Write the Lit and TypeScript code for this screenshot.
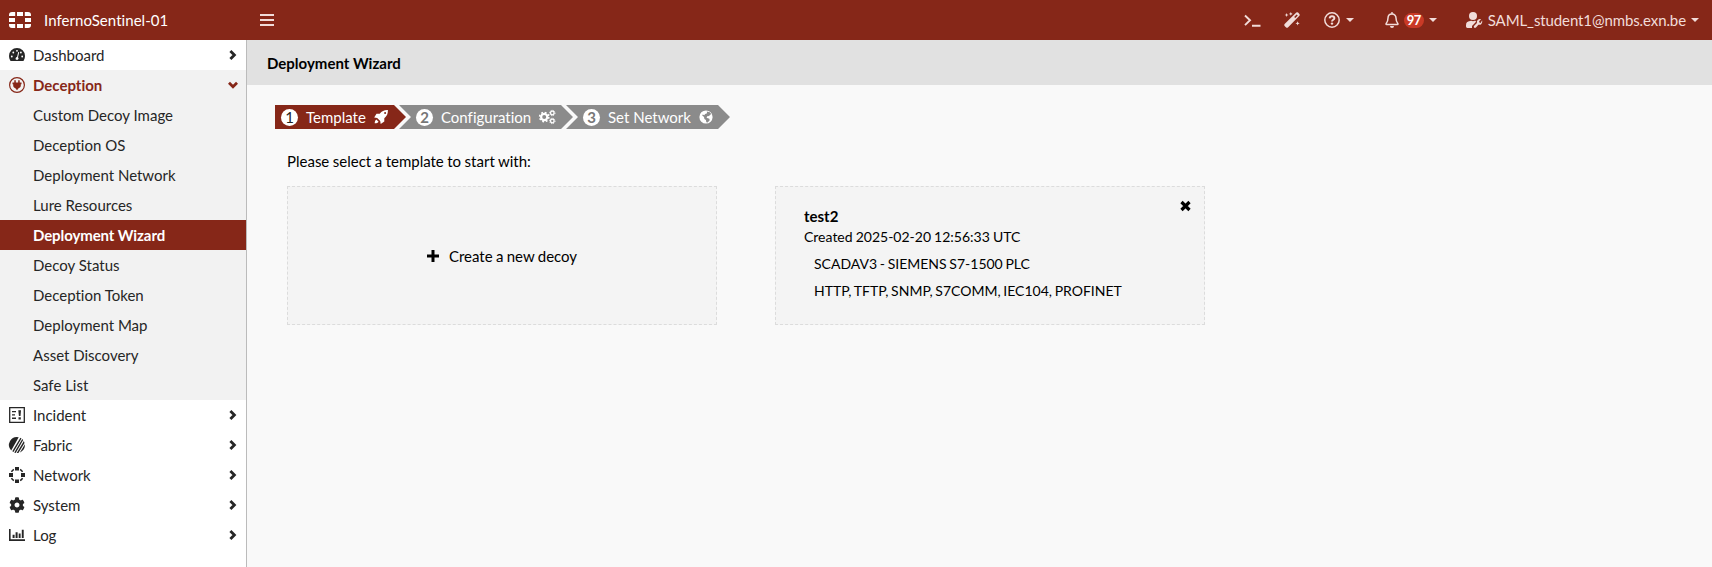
import { LitElement, html, svg, css } from "lit";
import { customElement, property, state } from "lit/decorators.js";

const COG =
  "M487.4 315.7l-42.6-24.6c4.3-23.2 4.3-47 0-70.2l42.6-24.6c4.9-2.8 7.1-8.6 5.5-14-11.1-35.6-30-67.8-54.7-94.6-3.8-4.1-10-5.1-14.8-2.3L380.8 110c-17.9-15.4-38.5-27.3-60.8-35.1V25.8c0-5.6-3.9-10.5-9.4-11.7-36.7-8.2-74.3-7.8-109.2 0-5.5 1.2-9.4 6.1-9.4 11.7V75c-22.2 7.9-42.8 19.8-60.8 35.1L88.7 85.5c-4.9-2.8-11-1.9-14.8 2.3-24.7 26.7-43.6 58.9-54.7 94.6-1.7 5.4.6 11.2 5.5 14L67.3 221c-4.3 23.2-4.3 47 0 70.2l-42.6 24.6c-4.9 2.8-7.1 8.6-5.5 14 11.1 35.6 30 67.8 54.7 94.6 3.8 4.1 10 5.1 14.8 2.3l42.6-24.6c17.9 15.4 38.5 27.3 60.8 35.1v49.2c0 5.6 3.9 10.5 9.4 11.7 36.7 8.2 74.3 7.8 109.2 0 5.5-1.2 9.4-6.1 9.4-11.7v-49.2c22.2-7.9 42.8-19.8 60.8-35.1l42.6 24.6c4.9 2.8 11 1.9 14.8-2.3 24.7-26.7 43.6-58.9 54.7-94.6 1.5-5.5-.7-11.3-5.6-14.1zM256 336c-44.1 0-80-35.9-80-80s35.9-80 80-80 80 35.9 80 80-35.9 80-80 80z";

// Every glyph is drawn in pixels of its own box: [width, height, shapes].
const ICONS: Record<string, [number, number, unknown]> = {
  logo: [22, 16, svg`<path fill="currentColor" d="M8 0h6v4H8zM8 12h6v4H8zM0 6h6v4H0zM16 6h6v4h-6zM3 0h3.200v4H0V3a3 3 0 0 1 3-3zM15.800 0H19a3 3 0 0 1 3 3v1h-6.200zM0 12h6.200v4H3a3 3 0 0 1-3-3zM15.800 12H22v1a3 3 0 0 1-3 3h-3.200z"/>`],
  menu: [14, 14, svg`<path fill="currentColor" d="M0 1h14v2H0zM0 6h14v2H0zM0 11h14v2H0z"/>`],
  dashboard: [16, 16, svg`<path fill="currentColor" d="M8 1A8 8 0 0 0 0 9c0 1.500.4 2.900 1.100 4.200.2.500.4.800.7.800h12.400c.3 0 .5-.3.700-.8.700-1.300 1.100-2.700 1.100-4.200a8 8 0 0 0-8-8z"/><g fill="#fff"><circle cx="2.800" cy="9.500" r=".9"/><circle cx="4.300" cy="5.500" r=".9"/><circle cx="8" cy="3.800" r=".9"/><circle cx="11.900" cy="5.500" r=".9"/><circle cx="13.200" cy="9.500" r=".9"/><path d="M9.200 5.100l1 .2-1.200 5a1.700 1.700 0 0 1-.1 2.500H7a1.700 1.700 0 0 1 1.100-2.800z"/></g>`],
  deception: [16, 16, svg`<circle cx="8" cy="8" r="7.400" fill="none" stroke="currentColor" stroke-width="1.200"/><path fill="currentColor" d="M5.300 3.300h1.500v2.200h2.400V3.300h1.500v2.200h1.800v1.700h-.7v1.300c0 1.400-.9 2.300-2.200 2.700L8 13.200l-1.600-2C5.100 10.800 4.200 9.900 4.200 8.500V7.200h-.7V5.500h1.800z"/>`],
  incident: [16, 16, svg`<path fill="none" stroke="currentColor" stroke-width="1.300" d="M.7.700h14.600v14.600H.7z"/><path fill="currentColor" d="M3 4h4v1.300H3zM3 7.300h3V8.600H3zM3 10.600h4v1.300H3zM9.300 3.300h2.700l-.5 5.700H9.900zM9.500 10.300h2.300v2.200H9.500z"/>`],
  fabric: [16, 16, svg`<path fill="currentColor" d="M9.700.2A8 8 0 0 0 2.200 13.500zM11.400.800L3.300 14.300l1.200.8L12.500 1.400zM13.300 2L5.300 15.400l1.400.5L14.200 3zM14.900 4.100L7.700 16l1.700-.1 6.100-10zM15.900 7.300l-5 8.200c2.700-1 5-3.900 5-7.200z"/>`],
  network: [16, 16, svg`<path fill="currentColor" d="M6 0h4v3.600H6zM6 12.400h4V16H6zM0 6h4v4H0zM12 6h4v4h-4z"/><path fill="none" stroke="currentColor" stroke-width="1.500" d="M2.500 4.900Q3.200 3.300 4.900 2.500M11.100 2.500q1.700.8 2.400 2.400M13.500 11.100q-.7 1.700-2.400 2.400M4.900 13.500Q3.200 12.700 2.500 11.100"/>`],
  system: [16, 16, svg`<path fill="currentColor" transform="translate(.1 .1) scale(.0309)" d=${COG}/>`],
  log: [16, 12, svg`<path fill="currentColor" d="M0 0h1.600v10.300H16V12H0zM3.600 5.700h2V9h-2zM6.600 3.300h2V9h-2zM9.700 4.600h1.900V9H9.700zM12.800.7h1.900V9h-1.900z"/>`],
  right: [8, 10, svg`<path fill="none" stroke="currentColor" stroke-width="2.800" d="M1.400 1L5.400 5l-4 4"/>`],
  down: [10, 8, svg`<path fill="none" stroke="currentColor" stroke-width="2.800" d="M1 1.700l4 4 4-4"/>`],
  terminal: [17, 14, svg`<path fill="none" stroke="currentColor" stroke-width="1.900" d="M1 1.500l5 4.800-5 4.800M8 11.800h8.500"/>`],
  wand: [16, 16, svg`<path fill="currentColor" fill-rule="evenodd" d="M12.300.6a1.300 1.300 0 0 1 1.800 0l1.300 1.300a1.300 1.300 0 0 1 0 1.800L3.900 15.400a1.300 1.300 0 0 1-1.800 0L.6 13.900a1.300 1.300 0 0 1 0-1.800zM10.100 4.900l1.200 1.200 2.500-2.500-1.200-1.200zM2.600 1l.6 1.400 1.400.6-1.400.6L2.600 5 2 3.600.6 3 2 2.400zM6.800 0l.6 1.300 1.300.6-1.300.6-.6 1.300-.6-1.300-1.300-.6 1.300-.6zM13.600 9.200l.6 1.500 1.500.6-1.500.6-.6 1.500-.6-1.500-1.500-.6 1.500-.6z"/>`],
  help: [16, 16, svg`<circle cx="8" cy="8" r="7.200" fill="none" stroke="currentColor" stroke-width="1.500"/><path fill="none" stroke="currentColor" stroke-width="1.900" d="M5.600 6.300C5.800 4.800 6.800 4.200 8 4.200c1.400 0 2.400.8 2.400 2C10.400 7.800 8 7.800 8 9.500"/><circle cx="8" cy="11.600" r="1.200" fill="currentColor"/>`],
  bell: [14, 16, svg`<path fill="none" stroke="currentColor" stroke-width="1.500" stroke-linejoin="round" d="M7 1.900c-2.500 0-4 1.900-4 4.200 0 3.600-1 4.600-1.900 5.600-.3.400-.1.800.4.800h11c.5 0 .7-.4.4-.8-.9-1-1.900-2-1.900-5.600C11 3.800 9.500 1.900 7 1.900z"/><path fill="currentColor" d="M6.300 0h1.400v2H6.300zM5 14h4a2 2 0 0 1-4 0z"/>`],
  caret: [8, 4, svg`<path fill="currentColor" d="M0 0h8L4 4z"/>`],
  user: [17, 16, svg`<circle cx="7" cy="4" r="4" fill="currentColor"/><path fill="currentColor" d="M4 9l1.200-.2q1.800.7 3.600 0l1.300.2-.7 1.600L6 14v2H1.400A1.400 1.400 0 0 1 0 14.600v-1.200A4.300 4.300 0 0 1 4 9zM16.100 8.200q.7 2.200-.7 3.700-1.300 1.200-3 .8l-2.400 2.800q-1 .9-1.900.1-.8-1 .1-1.900l2.700-2.700q-.4-1.800.8-3 1.500-1.400 3.400-.8l-2 2 .3 1.400 1.200.3z"/>`],
  rocket: [14, 14, svg`<path fill="currentColor" fill-rule="evenodd" d="M13.900.1c.2 3.600-1 6-3.600 8.200v3.300L6.700 14l-.5-3.100-3-3L.2 7.400 2.500 3.800l3.200-.1C7.900 1.100 10.400-.1 13.900.1zM11.100 2a1 1 0 1 0 0 2 1 1 0 0 0 0-2zM2.300 9.500l2.300 2.300C3.700 13 2.300 13.400.7 13.300.700 11.800 1.100 10.300 2.300 9.500z"/>`],
  cogs: [17, 14, svg`<g fill="none" stroke="currentColor"><circle cx="5.200" cy="7" r="3.100" stroke-width="2.200"/><circle cx="5.200" cy="7" r="4.600" stroke-width="1.600" stroke-dasharray="1.810 1.803"/><circle cx="13.300" cy="3" r="1.800" stroke-width="1.300"/><circle cx="13.300" cy="3" r="2.700" stroke-width="1" stroke-dasharray="1.060 1.060"/><circle cx="13.300" cy="11" r="1.800" stroke-width="1.300"/><circle cx="13.300" cy="11" r="2.700" stroke-width="1" stroke-dasharray="1.060 1.060"/></g>`],
  globe: [14, 14, svg`<circle cx="7" cy="7" r="6.600" fill="currentColor"/><path fill="#8b8b8b" d="M7.800 1.400l3.100.9 1.400 2-1.300.4-.8 1.200-2 .4-.6 1.500 2.800 1 .3 1.500-2 2.300-1.400-.3-.4-2.200-1.500-1.200L5 7.100 3.100 5.300l.7-.7 1.400.6 1-1.200 1.900-.7z"/>`],
  plus: [12, 12, svg`<path fill="currentColor" d="M4.500 0h3v4.500H12v3H7.500V12h-3V7.500H0v-3h4.500z"/>`],
  close: [11, 10, svg`<path fill="none" stroke="currentColor" stroke-width="3.200" d="M1.500 1l8 8M9.500 1l-8 8"/>`],
};

@customElement("ui-icon")
class UiIcon extends LitElement {
  static styles = css`
    :host { display: inline-flex; flex: none; }
    svg { display: block; overflow: visible; }
  `;
  @property() name = "";
  render() {
    const [w, h, shapes] = ICONS[this.name];
    return html`<svg width=${w} height=${h} viewBox="0 0 ${w} ${h}" aria-hidden="true">${shapes}</svg>`;
  }
}

@customElement("top-bar")
class TopBar extends LitElement {
  static styles = css`
    :host { display: flex; align-items: center; height: 40px; flex: none; background: #862718; color: #f1dcd9; }
    .brand { display: flex; align-items: center; gap: 13px; width: 251px; padding-left: 9px; color: #fff; letter-spacing: 0.05px; }
    .name { line-height: 20px; }
    .tools { display: flex; align-items: center; margin-left: auto; padding-right: 13px; }
    .tool { display: flex; align-items: center; gap: 6px; }
    .terminal { margin-right: 23px; padding-top: 1px; }
    .wand { margin-right: 24px; }
    .help { margin-right: 31px; }
    .alerts { margin-right: 29px; gap: 5px; }
    .user { gap: 5px; letter-spacing: -0.1px; }
    .badge { width: 20px; height: 15px; border-radius: 8px; background: #c93a26; color: #fff; font-size: 13px; font-weight: 700; letter-spacing: -0.5px; line-height: 15px; text-align: center; }
  `;
  render() {
    return html`
      <div class="brand"><ui-icon name="logo"></ui-icon><span class="name">InfernoSentinel-01</span></div>
      <ui-icon name="menu"></ui-icon>
      <div class="tools">
        <span class="tool terminal"><ui-icon name="terminal"></ui-icon></span>
        <span class="tool wand"><ui-icon name="wand"></ui-icon></span>
        <span class="tool help"><ui-icon name="help"></ui-icon><ui-icon name="caret"></ui-icon></span>
        <span class="tool alerts"><ui-icon name="bell"></ui-icon><span class="badge">97</span><ui-icon name="caret"></ui-icon></span>
        <span class="tool user"><ui-icon name="user"></ui-icon><span class="name">SAML_student1@nmbs.exn.be</span><ui-icon name="caret"></ui-icon></span>
      </div>
    `;
  }
}

interface Section { label: string; icon: string; items?: string[]; }

const SECTIONS: Section[] = [
  { label: "Dashboard", icon: "dashboard" },
  {
    label: "Deception",
    icon: "deception",
    items: ["Custom Decoy Image", "Deception OS", "Deployment Network", "Lure Resources", "Deployment Wizard", "Decoy Status", "Deception Token", "Deployment Map", "Asset Discovery", "Safe List"],
  },
  { label: "Incident", icon: "incident" },
  { label: "Fabric", icon: "fabric" },
  { label: "Network", icon: "network" },
  { label: "System", icon: "system" },
  { label: "Log", icon: "log" },
];

@customElement("side-nav")
class SideNav extends LitElement {
  static styles = css`
    :host { display: block; box-sizing: border-box; width: 247px; flex: none; background: #fff; border-right: 1px solid #bbb; color: #262626; }
    .row { display: flex; align-items: center; height: 30px; padding: 0 8px 0 9px; cursor: pointer; }
    .label { flex: 1; padding-left: 8px; }
    .open { background: #f2f2f2; }
    .open .head { color: #862718; font-weight: 700; }
    .head ui-icon:last-child { width: 10px; justify-content: center; }
    .item { height: 30px; box-sizing: border-box; padding: 1px 0 0 33px; line-height: 29px; cursor: pointer; }
    .current { background: #862718; color: #fff; font-weight: 700; letter-spacing: -0.1px; }
  `;
  @state() current = "Deployment Wizard";
  render() {
    return html`${SECTIONS.map(
      (s) => html`<div class=${s.items ? "open" : ""}>
        <div class="row head"><ui-icon name=${s.icon}></ui-icon><span class="label">${s.label}</span><ui-icon name=${s.items ? "down" : "right"}></ui-icon></div>
        ${s.items?.map((i) => html`<div class="item ${i === this.current ? "current" : ""}" @click=${() => (this.current = i)}>${i}</div>`)}
      </div>`
    )}`;
  }
}

@customElement("wizard-steps")
class WizardSteps extends LitElement {
  static styles = css`
    :host { display: flex; height: 24px; color: #fff; white-space: nowrap; }
    .step { display: flex; align-items: center; flex: none; box-sizing: border-box; height: 24px; background: #8b8b8b; clip-path: polygon(0 0, calc(100% - 12px) 0, 100% 50%, calc(100% - 12px) 100%, 0 100%, 12px 50%); }
    .step + .step { margin-left: -7px; }
    .first { width: 131px; background: #862718; padding-left: 6px; clip-path: polygon(0 0, calc(100% - 12px) 0, 100% 50%, calc(100% - 12px) 100%, 0 100%); }
    .second { width: 174px; padding-left: 17px; }
    .third { width: 164px; padding-left: 17px; }
    .num { width: 17px; height: 17px; border-radius: 50%; background: #fff; color: #777; line-height: 17px; text-align: center; font-weight: 700; }
    .first .num { color: #222; font-weight: 400; }
    .title { padding: 0 8px; }
  `;
  render() {
    return html`
      <div class="step first"><span class="num">1</span><span class="title">Template</span><ui-icon name="rocket"></ui-icon></div>
      <div class="step second"><span class="num">2</span><span class="title">Configuration</span><ui-icon name="cogs"></ui-icon></div>
      <div class="step third"><span class="num">3</span><span class="title">Set Network</span><ui-icon name="globe"></ui-icon></div>
    `;
  }
}

@customElement("app-root")
class AppRoot extends LitElement {
  static styles = css`
    :host { display: flex; flex-direction: column; height: 100vh; overflow: hidden; font: 15px/20px Lato, sans-serif; font-variant-ligatures: none; color: #000; background: #f9f9f9; }
    .body { display: flex; flex: 1; min-height: 0; }
    .main { flex: 1; min-width: 0; }
    .heading { height: 45px; box-sizing: border-box; padding: 1px 20px 0; background: #e1e1e1; font-weight: 700; line-height: 45px; }
    .content { padding: 20px 28px 0; }
    .prompt { margin: 22px 12px 15px; word-spacing: -0.35px; }
    .cards { display: flex; gap: 58px; padding-left: 12px; }
    .card { box-sizing: border-box; width: 430px; height: 139px; border: 1px dashed #dcdcdc; background: #f4f4f4; }
    .create { display: flex; align-items: center; justify-content: center; gap: 10px; padding-top: 1px; word-spacing: -0.5px; }
    .template { display: flex; align-items: flex-start; justify-content: space-between; padding: 19px 13px 0 28px; font-size: 14px; }
    .template ui-icon { margin-top: -5px; }
    .title { margin-bottom: 1px; font-size: 15px; font-weight: 700; }
    .created { word-spacing: -0.5px; }
    .detail { padding: 7px 0 0 10px; word-spacing: -0.9px; }
  `;
  render() {
    return html`
      <top-bar></top-bar>
      <div class="body">
        <side-nav></side-nav>
        <main class="main">
          <div class="heading">Deployment Wizard</div>
          <div class="content">
            <wizard-steps></wizard-steps>
            <div class="prompt">Please select a template to start with:</div>
            <div class="cards">
              <div class="card create"><ui-icon name="plus"></ui-icon><span>Create a new decoy</span></div>
              <div class="card template">
                <div>
                  <div class="title">test2</div>
                  <div class="created">Created 2025-02-20 12:56:33 UTC</div>
                  <div class="detail">SCADAV3 - SIEMENS S7-1500 PLC</div>
                  <div class="detail">HTTP, TFTP, SNMP, S7COMM, IEC104, PROFINET</div>
                </div>
                <ui-icon name="close"></ui-icon>
              </div>
            </div>
          </div>
        </main>
      </div>
    `;
  }
}
